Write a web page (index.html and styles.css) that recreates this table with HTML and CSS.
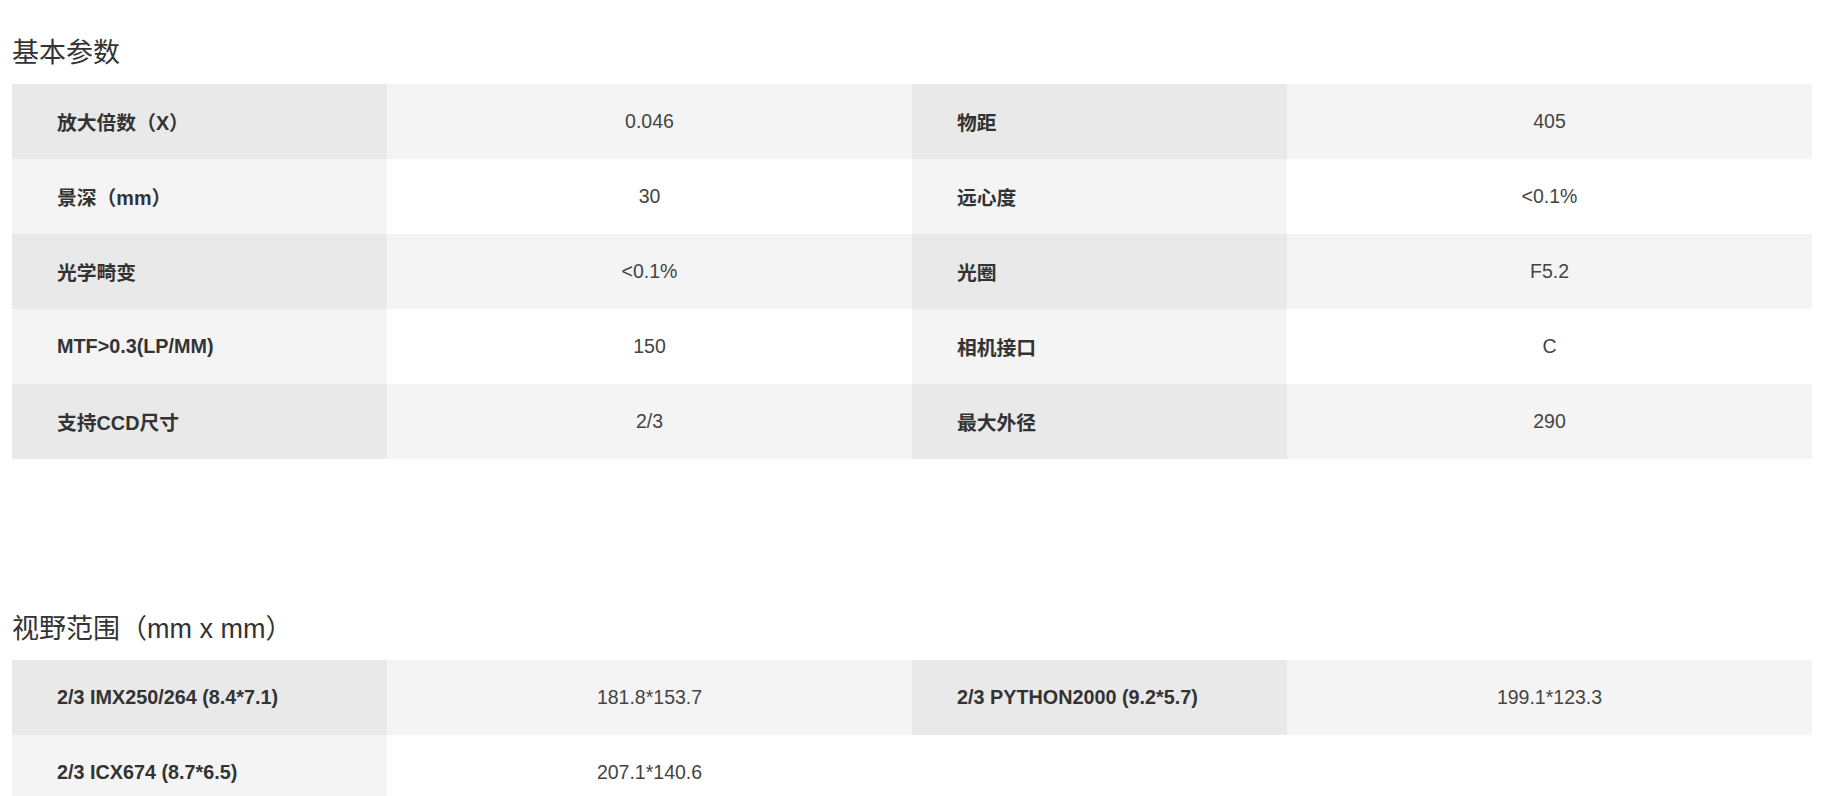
FILE: index.html
```html
<!DOCTYPE html>
<html lang="zh-CN">
<head>
<meta charset="utf-8">
<title>参数</title>
<link rel="stylesheet" href="styles.css">
</head>
<body>
<div class="page">
  <section class="section">
    <h3 class="section-title">基本参数</h3>
    <table class="spec">
      <colgroup><col class="c-label"><col class="c-value"><col class="c-label"><col class="c-value"></colgroup>
      <tbody>
        <tr><td class="label">放大倍数（X）</td><td class="value">0.046</td><td class="label">物距</td><td class="value">405</td></tr>
        <tr><td class="label">景深（mm）</td><td class="value">30</td><td class="label">远心度</td><td class="value">&lt;0.1%</td></tr>
        <tr><td class="label">光学畸变</td><td class="value">&lt;0.1%</td><td class="label">光圈</td><td class="value">F5.2</td></tr>
        <tr><td class="label">MTF&gt;0.3(LP/MM)</td><td class="value">150</td><td class="label">相机接口</td><td class="value">C</td></tr>
        <tr><td class="label">支持CCD尺寸</td><td class="value">2/3</td><td class="label">最大外径</td><td class="value">290</td></tr>
      </tbody>
    </table>
  </section>
  <section class="section section-next">
    <h3 class="section-title">视野范围（mm x mm）</h3>
    <table class="spec">
      <colgroup><col class="c-label"><col class="c-value"><col class="c-label"><col class="c-value"></colgroup>
      <tbody>
        <tr><td class="label">2/3 IMX250/264 (8.4*7.1)</td><td class="value">181.8*153.7</td><td class="label">2/3 PYTHON2000 (9.2*5.7)</td><td class="value">199.1*123.3</td></tr>
        <tr><td class="label">2/3 ICX674 (8.7*6.5)</td><td class="value">207.1*140.6</td><td class="empty"></td><td class="empty"></td></tr>
      </tbody>
    </table>
  </section>
</div>
</body>
</html>
```
FILE: styles.css
```css
html, body {
  margin: 0;
  padding: 0;
  background: #fff;
}
body {
  font-family: "Liberation Sans", Arial, "Noto Sans CJK SC", sans-serif;
  color: #333;
}
.page {
  padding: 33px 0 0 12px;
}
.section-title {
  margin: 0 0 11px;
  font-size: 27px;
  line-height: 40px;
  font-weight: normal;
  color: #333;
}
.section-next {
  margin-top: 150px;
}
.spec {
  width: 1800px;
  border-collapse: collapse;
  border-spacing: 0;
  table-layout: fixed;
}
.c-label { width: 375px; }
.c-value { width: 525px; }
.spec td {
  height: 75px;
  padding: 0;
  font-size: 19.5px;
  vertical-align: middle;
}
.spec .label {
  padding-left: 45px;
  font-size: 19.8px;
  font-weight: bold;
  color: #333;
  text-align: left;
}
.spec .value {
  text-align: center;
  color: #444;
}
.spec tr:nth-child(odd) .label { background: #e9e9e9; }
.spec tr:nth-child(odd) .value { background: #f4f4f4; }
.spec tr:nth-child(even) .label { background: #f4f4f4; }
.spec tr:nth-child(even) .value { background: #fff; }
.spec tr .empty { background: #fff; }
```
